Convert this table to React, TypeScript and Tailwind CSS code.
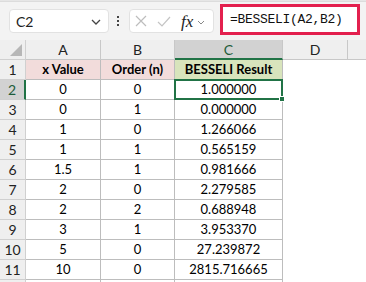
import React from "react";

const rows: [string, string, string][] = [
  ["0", "0", "1.000000"],
  ["0", "1", "0.000000"],
  ["1", "0", "1.266066"],
  ["1", "1", "0.565159"],
  ["1.5", "1", "0.981666"],
  ["2", "0", "2.279585"],
  ["2", "2", "0.688948"],
  ["3", "1", "3.953370"],
  ["5", "0", "27.239872"],
  ["10", "0", "2815.716665"],
];

const font = { fontFamily: "Lato, 'Open Sans', sans-serif" };

export default function App() {
  return (
    <div className="w-[366px] h-[282px] overflow-hidden bg-white text-black" style={font}>
      {/* toolbar */}
      <div className="h-[40px] bg-[#f3f3f3] relative">
        <div className="h-[2px] bg-[#e6e6e6] border-b border-[#dcdcdc]" />
        <div className="flex items-start">
          <div className="ml-[9px] mt-[7px] w-[100px] h-[24px] bg-white rounded-[4px] border border-[#e2e2e2] flex items-center justify-between pl-[6px] pr-[7px]">
            <span className="text-[14px] text-[#222]">C2</span>
            <svg width="10" height="6" viewBox="0 0 10 6" className="mt-[2px]">
              <path d="M1 1 L5 5 L9 1" fill="none" stroke="#444" strokeWidth="1.3" />
            </svg>
          </div>
          <div className="ml-[8px] mt-[14px] flex flex-col gap-[2px]">
            <div className="w-[2px] h-[2px] bg-[#444]" />
            <div className="w-[2px] h-[2px] bg-[#444]" />
            <div className="w-[2px] h-[2px] bg-[#444]" />
          </div>
          <div className="ml-[10px] mt-[7px] w-[85px] h-[24px] bg-white rounded-[4px] border border-[#e2e2e2] flex items-center pl-[5px]">
            <svg width="12" height="12" viewBox="0 0 12 12">
              <path d="M1 1 L11 11 M11 1 L1 11" stroke="#bdbdbd" strokeWidth="1.2" />
            </svg>
            <svg width="14" height="11" viewBox="0 0 14 11" className="ml-[10px]">
              <path d="M1 6 L5 10 L13 1" fill="none" stroke="#c4c4c4" strokeWidth="1.2" />
            </svg>
            <span className="ml-[10px] text-[17px] italic text-[#222] leading-none" style={{ fontFamily: "'Liberation Serif', serif" }}>
              fx
            </span>
            <svg width="8" height="5" viewBox="0 0 8 5" className="ml-[4px] mt-[2px]">
              <path d="M1 1 L4 4 L7 1" fill="none" stroke="#888" strokeWidth="1" />
            </svg>
          </div>
          <div className="ml-[6px] mt-[2px] w-[140px] h-[31px] bg-white border-[3px] border-[#e3204e] flex items-center pl-[7px]">
            <span className="text-[13px] text-[#111] tracking-[-0.3px]" style={{ fontFamily: "'Liberation Mono', monospace" }}>
              =BESSELI(A2,B2)
            </span>
          </div>
        </div>
      </div>

      {/* grid */}
      <div className="grid grid-cols-[26px_75px_74px_108px_65px_1fr] auto-rows-[20px] text-[13px] relative">
        {/* header row */}
        <div className="bg-[#efefef] border-r border-b border-[#d0d0d0] relative">
          <svg width="12" height="12" viewBox="0 0 12 12" className="absolute right-[3px] bottom-[3px]">
            <path d="M12 0 L12 12 L0 12 Z" fill="#b7b7b7" />
          </svg>
        </div>
        <div className="bg-[#efefef] border-r border-b border-[#c8c8c8] flex items-center justify-center text-[#222] text-[14px]">A</div>
        <div className="bg-[#efefef] border-r border-b border-[#c8c8c8] flex items-center justify-center text-[#222] text-[14px]">B</div>
        <div className="bg-[#d2d2d2] border-r border-[#c8c8c8] border-b-2 border-b-[#217346] flex items-center justify-center text-[#1d5c3a] text-[14px]">C</div>
        <div className="bg-[#efefef] border-r border-b border-[#c8c8c8] flex items-center justify-center text-[#222] text-[14px]">D</div>
        <div className="bg-[#efefef] border-b border-[#c8c8c8]" />

        {/* row 1 */}
        <div className="bg-[#efefef] border-r border-b border-[#d0d0d0] flex items-center justify-center text-[#222] text-[14px]">1</div>
        <div className="bg-[#f2dcdb] border-r border-b border-[#bdbdbd] flex items-center justify-center font-bold">x Value</div>
        <div className="bg-[#f2dcdb] border-r border-b border-[#bdbdbd] flex items-center justify-center font-bold">Order (n)</div>
        <div className="bg-[#d8e4bc] border-r border-b border-[#bdbdbd] flex items-center justify-center font-bold">BESSELI Result</div>
        <div />
        <div />

        {rows.map((r, i) => {
          const sel = i === 0;
          return (
            <React.Fragment key={i}>
              <div
                className={
                  sel
                    ? "bg-[#d2d2d2] border-r-2 border-r-[#217346] border-b border-b-[#d0d0d0] flex items-center justify-center text-[#1d5c3a] text-[14px]"
                    : "bg-[#efefef] border-r border-b border-[#d0d0d0] flex items-center justify-center text-[#222] text-[14px]"
                }
              >
                {i + 2}
              </div>
              <div className="border-r border-b border-[#bdbdbd] flex items-center justify-center">{r[0]}</div>
              <div className="border-r border-b border-[#bdbdbd] flex items-center justify-center">{r[1]}</div>
              <div className={sel ? "border-2 border-[#217346] -mt-px -ml-px relative flex items-center justify-center" : "border-r border-b border-[#bdbdbd] flex items-center justify-center"}>
                {r[2]}
                {sel && <div className="absolute -right-[4px] -bottom-[4px] w-[6px] h-[6px] bg-[#217346] border border-white" />}
              </div>
              <div />
              <div />
            </React.Fragment>
          );
        })}
        <div className="bg-[#efefef] border-r border-[#d0d0d0]" />
        <div className="border-r border-[#bdbdbd]" />
        <div className="border-r border-[#bdbdbd]" />
        <div className="border-r border-[#bdbdbd]" />
        <div />
        <div />
      </div>
    </div>
  );
}
